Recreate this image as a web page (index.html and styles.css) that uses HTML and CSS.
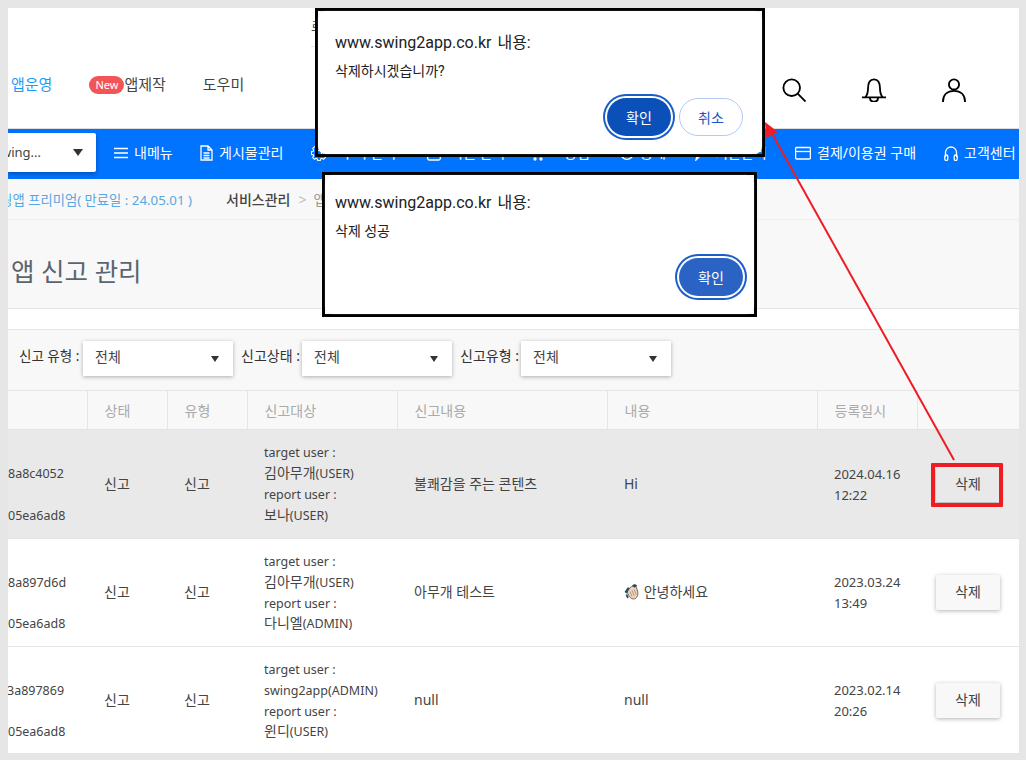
FILE: index.html
```html
<!DOCTYPE html>
<html lang="ko">
<head>
<meta charset="utf-8">
<title>앱 신고 관리</title>
<link rel="stylesheet" href="styles.css">
</head>
<body>
<div class="frame">
  <header class="topbar">
    <div class="util"><span class="util-text">로그인</span></div>
    <div class="gnb">
      <nav class="gnb-links">
        <a class="gnb-link active">앱운영</a>
        <a class="gnb-link make"><span class="badge">New</span>앱제작</a>
        <a class="gnb-link help">도우미</a>
      </nav>
      <div class="gnb-icons">
        <svg class="ico" viewBox="0 0 26 26"><circle cx="10.500" cy="10.500" r="9"/><path d="M17 17 25.500 25.500"/></svg>
        <svg class="ico" viewBox="0 0 26 26"><path d="M0 21h26M3.500 21c2-2 3-4.500 3-9.500C6.500 5 9 1.500 13 1.500S19.500 5 19.500 11.500c0 5 1 7.500 3 9.500M8.500 21.500c.5 5.500 8.500 5.500 9 0"/></svg>
        <svg class="ico" viewBox="0 0 26 26"><circle cx="13" cy="7" r="5.500"/><path d="M1 26c0-8 5-12 12-12s12 4 12 12"/></svg>
      </div>
    </div>
  </header>

  <nav class="lnb">
    <div class="app-select"><span class="app-name">Swing...</span><i class="caret"></i></div>
    <a class="lnb-item m1"><svg class="lnb-ico w14" viewBox="0 0 14 16"><path d="M0 3.500h14M0 8h14M0 12.500h14"/></svg>내메뉴</a>
    <a class="lnb-item m2"><svg class="lnb-ico w13" viewBox="0 0 13 16"><path d="M1 1h7l4 4v10H1zM8 1v4h4M3.500 8h6M3.500 10.500h6M3.500 13h6"/></svg>게시물관리</a>
    <a class="lnb-item m3"><svg class="lnb-ico w16" viewBox="-1.500 .3 19 19"><circle cx="8" cy="9.800" r="3"/><path d="M6.500 .7h3l.4 2.100 1.700.7 1.800-1.200 2.100 2.100-1.200 1.800.7 1.700 2.100.4v3l-2.100.4-.7 1.700 1.200 1.800-2.100 2.100-1.800-1.200-1.700.7-.4 2.100h-3l-.4-2.100-1.700-.7-1.800 1.200-2.100-2.100 1.200-1.800-.7-1.700-2.100-.4v-3l2.100-.4.7-1.700-1.200-1.800 2.100-2.100 1.800 1.200 1.700-.7z"/></svg>푸시 관리</a>
    <a class="lnb-item m4"><svg class="lnb-ico w14" viewBox="0 0 14 16"><rect x=".7" y="2" width="12.600" height="13" rx="1.500"/></svg>회원 관리</a>
    <a class="lnb-item m5"><svg class="lnb-ico w14" viewBox="0 0 14 16"><path d="M1 2h2l2 9h7l1-6H4"/><circle cx="5" cy="14" r="1"/><circle cx="11" cy="14" r="1"/></svg>상점</a>
    <a class="lnb-item m6"><svg class="lnb-ico w14" viewBox="0 0 14 16"><circle cx="7" cy="8" r="6.300"/></svg>통계</a>
    <a class="lnb-item m7"><svg class="lnb-ico w12" viewBox="0 0 12 16"><path d="M1 15l1-4 8-9 1.500 1.500-8 9z"/></svg>기본관리</a>
    <a class="lnb-item m8"><svg class="lnb-ico w16" viewBox="0 0 16 16"><rect x=".6" y="2.500" width="14.800" height="11.500" rx="1"/><path d="M.6 6.500h14.800"/></svg>결제/이용권 구매</a>
    <a class="lnb-item m9"><svg class="lnb-ico w14" viewBox="0 0 14 16"><path d="M1.500 12V7.500a5.500 5.500 0 0 1 11 0V12"/><rect x=".8" y="10" width="3" height="5.500" rx="1.500"/><rect x="10.200" y="10" width="3" height="5.500" rx="1.500"/></svg>고객센터</a>
  </nav>

  <div class="crumbs">
    <div class="plan-wrap"><span class="plan">스윙앱 프리미엄( 만료일 : 24.05.01 )</span></div>
    <span class="crumb-main">서비스관리</span>
    <span class="crumb-sep">&gt;</span>
    <span class="crumb-sub">앱 신고 관리</span>
  </div>
  <div class="title-bar"><h1 class="page-title">앱 신고 관리</h1></div>
  <div class="spacer"></div>

  <div class="filters">
    <label class="f-label f1">신고 유형 :</label>
    <div class="f-select"><span>전체</span><i class="caret small"></i></div>
    <label class="f-label">신고상태 :</label>
    <div class="f-select"><span>전체</span><i class="caret small"></i></div>
    <label class="f-label">신고유형 :</label>
    <div class="f-select"><span>전체</span><i class="caret small"></i></div>
  </div>

  <table class="report">
    <colgroup>
      <col class="c1"><col class="c2"><col class="c3"><col class="c4"><col class="c5"><col class="c6"><col class="c7"><col class="c8">
    </colgroup>
    <thead>
      <tr><th></th><th>상태</th><th>유형</th><th>신고대상</th><th>신고내용</th><th>내용</th><th>등록일시</th><th></th></tr>
    </thead>
    <tbody>
      <tr class="hl r1">
        <td class="id"><div>&nbsp;</div><div>8a8c4052</div><div>&nbsp;</div><div>05ea6ad8</div></td>
        <td>신고</td><td>신고</td>
        <td class="who">target user :<br><span class="ko">김아무개</span>(USER)<br>report user :<br><span class="ko">보나</span>(USER)</td>
        <td>불쾌감을 주는 콘텐츠</td>
        <td>Hi</td>
        <td class="date">2024.04.16<br>12:22</td>
        <td class="act"><button class="del">삭제</button></td>
      </tr>
      <tr class="r2">
        <td class="id"><div>&nbsp;</div><div>8a897d6d</div><div>&nbsp;</div><div>05ea6ad8</div></td>
        <td>신고</td><td>신고</td>
        <td class="who">target user :<br><span class="ko">김아무개</span>(USER)<br>report user :<br><span class="ko">다니엘</span>(ADMIN)</td>
        <td>아무개 테스트</td>
        <td><svg class="wave" viewBox="0 0 15 15"><path fill="#f5d3b8" stroke="#222" stroke-width=".6" d="M2.500 6 7 2.500l4-1 2 6c.5 3.500-1.500 6.500-4 6.500-3 0-5-3-6.500-8z"/><path fill="#1f4f63" d="M.5 7.500 3.500 3l2 1-3 5zM7.500 1.500 10 0l2.500 1.500L10 3.500zM1.500 10l1.500-.5 1.500 3-1.500 1z"/><path stroke="#777" stroke-width=".6" fill="none" d="M5.500 7l2 4.500M7.500 6l2 5M9.500 5l2 5"/></svg> 안녕하세요</td>
        <td class="date">2023.03.24<br>13:49</td>
        <td class="act"><button class="del">삭제</button></td>
      </tr>
      <tr class="r3">
        <td class="id"><div>&nbsp;</div><div class="cut">3a897869</div><div>&nbsp;</div><div>05ea6ad8</div></td>
        <td>신고</td><td>신고</td>
        <td class="who">target user :<br>swing2app(ADMIN)<br>report user :<br><span class="ko">윈디</span>(USER)</td>
        <td>null</td>
        <td>null</td>
        <td class="date">2023.02.14<br>20:26</td>
        <td class="act"><button class="del">삭제</button></td>
      </tr>
    </tbody>
  </table>
</div>

<div class="dialog confirm">
  <p class="d-host">www.swing2app.co.kr 내용:</p>
  <p class="d-msg">삭제하시겠습니까?</p>
  <div class="d-actions">
    <button class="d-ok dark">확인</button>
    <button class="d-cancel">취소</button>
  </div>
</div>
<div class="dialog success">
  <p class="d-host">www.swing2app.co.kr 내용:</p>
  <p class="d-msg">삭제 성공</p>
  <div class="d-actions">
    <button class="d-ok">확인</button>
  </div>
</div>

<div class="mark"></div>
<svg class="arrow" viewBox="0 0 1026 760">
  <path d="M954 460 770 130" />
  <polygon points="765,122 778,132 766,138" />
</svg>
</body>
</html>
```
FILE: styles.css
```css
* { box-sizing: border-box; }
html, body { margin: 0; padding: 0; }
body {
  width: 1026px; height: 760px; overflow: hidden; position: relative;
  background: #e6e6e6;
  font-family: "Noto Sans", "Noto Sans CJK KR", sans-serif;
  color: #444;
}
.frame {
  margin: 8px 0 0 8px; width: 1011px; height: 745px;
  background: #fff; overflow: hidden;
  display: flex; flex-direction: column;
}
.topbar { height: 121px; border-bottom: 1px solid #ddd; flex: none; }
.util { height: 39px; padding-left: 303px; }
.util-text { display: block; width: 200px; height: 39px; border-bottom: 1px solid #e5e5e5; padding-top: 9px; font-size: 13px; line-height: 18px; }
.gnb { display: flex; justify-content: space-between; }
.gnb-links { display: flex; padding: 27px 0 0 3px; font-size: 15px; line-height: 20px; color: #444; }
.gnb-link { display: block; }
.gnb-link.active { color: #1e9bf5; }
.gnb-link.make { margin-left: 37px; display: flex; }
.gnb-link.help { margin-left: 37px; }
.badge {
  background: #f25555; color: #fff; border-radius: 9px; font-size: 11px; line-height: 18px;
  width: 35px; height: 18px; text-align: center; display: block; margin-top: 2px;
}
.gnb-icons { display: flex; gap: 56px; padding: 31px 53px 0 0; }
.ico { width: 24px; height: 24px; fill: none; stroke: #000; stroke-width: 2; display: block; }

.lnb { height: 50px; flex: none; background: #0073ff; position: relative; color: #fff; font-size: 14px; }
.app-select {
  position: absolute; left: 0; top: 4px; width: 88px; height: 39px; background: #fff;
  box-shadow: 0 2px 4px rgba(0,0,0,.3); border-radius: 0 2px 2px 0; color: #444;
  overflow: hidden;
}
.app-name { position: absolute; right: 55px; top: 10px; font-size: 13px; line-height: 18px; white-space: nowrap; }
.caret { position: absolute; right: 13px; top: 16px; border-style: solid; border-color: #333 transparent transparent; border-width: 7px 5px 0; }
.lnb-item { position: absolute; top: 14px; line-height: 20px; display: flex; align-items: center; gap: 6px; white-space: nowrap; }
.lnb-ico { height: 16px; fill: none; stroke: #fff; stroke-width: 1.300; flex: none; }
.w12 { width: 12px; } .w13 { width: 13px; } .w14 { width: 14px; } .w16 { width: 16px; }
.m1 { left: 106px; } .m2 { left: 192px; }
.m3 { left: 303px; gap: 14px; } .m4 { left: 419px; gap: 9px; }
.m5 { left: 522px; gap: 20px; } .m6 { left: 612px; } .m7 { left: 687px; gap: 8px; }
.m8 { left: 787px; } .m9 { left: 936px; }

.crumbs {
  height: 41px; flex: none; background: #f8f8f8; border-bottom: 1px solid #eee;
  display: flex; align-items: center; font-size: 14px; white-space: nowrap; overflow: hidden;
}
.plan-wrap { width: 218px; flex: none; display: flex; justify-content: flex-end; padding-right: 34px; }
.plan { color: #5aa6e0; flex: none; font-size: 13.300px; }
.crumb-main { font-weight: 500; color: #444; }
.crumb-sep { color: #bbb; margin: 0 7px 0 8px; }
.crumb-sub { color: #999; }
.title-bar { height: 89px; flex: none; background: #f8f8f8; border-bottom: 1px solid #e5e5e5; padding: 33px 0 0 3px; }
.page-title { margin: 0; font-size: 25.500px; font-weight: 400; line-height: 36px; color: #5a6570; }
.spacer { height: 20px; flex: none; }

.filters {
  height: 62px; flex: none; background: #f8f8f8; border-top: 1px solid #e5e5e5; border-bottom: 1px solid #e5e5e5;
  display: flex; align-items: center; font-size: 14px; color: #333; padding-left: 11px;
}
.f-label { line-height: 18px; margin-top: -9px; width: 61px; flex: none; white-space: nowrap; }
.f-label.f1 { width: 64px; font-size: 13.500px; }
.f-select {
  width: 150px; height: 35px; background: #fff; box-shadow: 0 1px 4px rgba(0,0,0,.3); position: relative;
  padding: 6px 0 0 12px; font-size: 14px; line-height: 20px; color: #444; margin-right: 8px; margin-top: -4px; flex: none;
}
.caret.small { right: 14px; top: 15px; border-width: 6px 4px 0; }

.report { width: 1011px; table-layout: fixed; border-collapse: collapse; flex: none; font-size: 14px; }
.c1 { width: 79px; } .c2 { width: 80px; } .c3 { width: 80px; } .c4 { width: 150px; }
.c5 { width: 210px; } .c6 { width: 210px; } .c7 { width: 100px; } .c8 { width: 102px; }
.report th {
  height: 38px; background: #f8f8f8; border-bottom: 1px solid #e5e5e5; border-right: 1px solid #e5e5e5;
  font-weight: 400; color: #aaa; text-align: left; padding: 0 0 0 17px; font-size: 14px;
}
.report th:last-child { border-right: 0; }
.report td { padding: 0 0 0 17px; border-bottom: 1px solid #e5e5e5; line-height: 20.800px; color: #444; }
.report tr.r1 { height: 109px; }
.report tr.r2 { height: 108px; }
.report tr.r3 { height: 108px; }
.report tr.r1 td { padding-top: 2px; }
.report tr.r3 td { padding-top: 1px; }
.hl td { background: #e9e9e9; }
.report tr td.who { font-size: 12.500px; padding-top: 3px; }
.ko { font-size: 14px; line-height: 1; }
.report tr td.id { padding: 3px 0 0; font-size: 12.500px; white-space: nowrap; overflow: hidden; }
.cut { margin-left: -1px; }
.report tr td.date { font-size: 13px; padding-top: 2px; }
.report td.act { padding-left: 19px; }
.del {
  display: block; width: 64px; height: 35px; background: #f8f8f8; border: 0; border-radius: 2px;
  box-shadow: 0 1px 4px rgba(0,0,0,.3); font: inherit; font-size: 14px; color: #444; padding: 0;
}
.hl .del { background: #e9e9e9; }
.wave { width: 16px; height: 16px; vertical-align: -3px; }

.dialog {
  position: absolute; border: 3px solid #000; z-index: 1;
  padding: 22px 17px 0; font-family: "Roboto", "Noto Sans CJK KR", sans-serif; color: #202124;
}
.dialog::before {
  content: ""; position: absolute; inset: 0; background: #fff; border-radius: 8px;
  box-shadow: 0 0 1px #ccc; z-index: -1;
}
.confirm { left: 315px; top: 8px; width: 450px; height: 149px; }
.success { left: 322px; top: 172px; width: 435px; height: 145px; padding: 18px 10px 0; background: #fff; }
.d-host { margin: 0; font-size: 16px; line-height: 20px; word-spacing: 2px; }
.d-msg { margin: 9px 0 0; font-size: 14px; line-height: 18px; }
.d-actions { position: absolute; display: flex; gap: 8px; right: 19px; top: 87px; }
.d-ok, .d-cancel { font: inherit; font-size: 14px; border-radius: 20px; padding: 0; width: 64px; height: 38px; }
.d-ok {
  background: #2a63c4; color: #fff; border: 0;
  box-shadow: 0 0 0 2px #fff, 0 0 0 4px #1a5fc8;
}
.d-ok.dark { background: #0b50b8; }
.d-cancel { background: #fff; color: #1a56c0; border: 1px solid #b0ccf5; }
.success .d-actions { right: 11px; top: 83px; }

.mark { position: absolute; left: 931px; top: 463px; width: 72px; height: 44px; border: 4px solid #ee1c25; border-radius: 1px; z-index: 2; }
.arrow { position: absolute; left: 0; top: 0; width: 1026px; height: 760px; pointer-events: none; z-index: 2; }
.arrow path { stroke: #ee1c25; stroke-width: 2; fill: none; }
.arrow polygon { fill: #ee1c25; }
```
